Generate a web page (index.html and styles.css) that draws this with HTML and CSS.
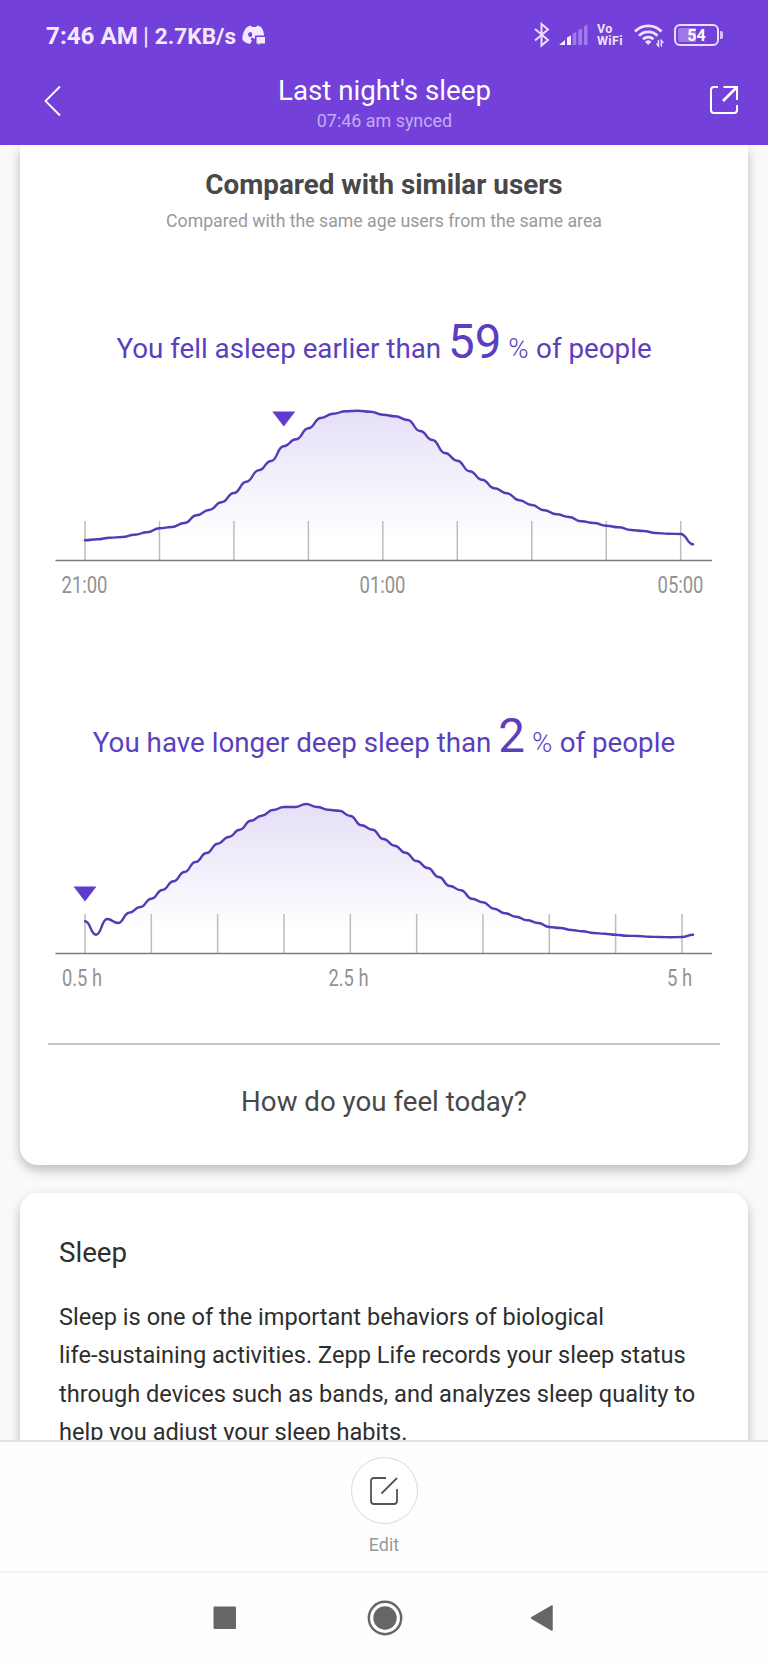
FILE: index.html
```html
<!DOCTYPE html>
<html lang="en">
<head>
  <meta charset="UTF-8" />
  <meta name="viewport" content="width=device-width, initial-scale=1.0"/>
  <title>Last night's sleep</title>
  <link rel="stylesheet" href="styles.css">
</head>
<body>

  <header>
    <!-- Status bar -->
    <div class="status-bar">
      <div class="status-left">
        <span class="time">7:46 AM</span>
        <span class="bar">|</span>
        <span class="speed">2.7KB/s</span>
        <svg class="discord" width="24" height="22" viewBox="0 0 24 22">
          <path fill="#f4e8ff" fill-rule="evenodd" d="M5 2 L8.500 .5 L10 2 H14 L15.500 .5 L19 2 C21 4.500 22 7.500 22 10.500 H13 V13.500 C12 13.500 10.500 13 10 12.500 L8.500 14 L10 15.500 L8 19 C4 18 1.500 16.500 .5 14.500 C0 10 2 5 5 2 Z M8.200 7 A2.100 2.500 0 1 0 8.200 12 A2.100 2.500 0 1 0 8.200 7 Z"/>
          <path fill="#f4e8ff" d="M14.500 12 H23 V18.500 H18 L16.500 20.500 V18.500 H14.500 Z"/>
        </svg>
      </div>
      <div class="status-right">
        <svg width="16" height="26" viewBox="0 0 16 26" fill="none" stroke="#eddcff" stroke-width="2">
          <path d="M1 7 L14 18 L7.500 23.500 V2 L14 7.500 L1 18.500"/>
        </svg>
        <svg class="signal" width="30" height="22" viewBox="0 0 30 22">
          <path fill="#f6edff" d="M0 21 L6 16 V21 Z M8 21 V13.500 L12 11.500 V21 Z"/>
          <path fill="#a07ae8" d="M13.700 21 V9.800 L17.300 8 V21 Z M19.300 21 V6.300 L23 4.500 V21 Z M25 21 V2.500 L28.500 .5 V21 Z"/>
        </svg>
        <div class="vowifi">
          <span>Vo</span>
          <span>WiFi</span>
        </div>
        <svg class="wifi" width="32" height="26" viewBox="0 0 32 26" fill="none" stroke="#f0e2ff" stroke-width="2.800">
          <path d="M2 9.500 A18.500 18.500 0 0 1 28.500 9.500"/>
          <path d="M6 13.700 A13 13 0 0 1 24.500 13.700"/>
          <path d="M10 17.300 A7.600 7.600 0 0 1 20.500 17.300"/>
          <path fill="#f0e2ff" stroke="none" d="M12 19.700 Q15.200 17 18.500 19.700 L15.200 23 Z"/>
          <path stroke-width="1.400" d="M25.500 18 V24 L23.500 21.500 M28.300 24.500 V18.500 L30.300 21"/>
        </svg>
        <div class="battery"><span>54</span></div>
        <div class="battery-cap"></div>
      </div>
    </div>

    <!-- Title bar -->
    <div class="title-bar">
      <svg width="20" height="32" viewBox="0 0 20 32" fill="none" stroke="#fff" stroke-width="1.800">
        <path d="M17 1.500 L2.500 16 L17 30.500"/>
      </svg>
      <div class="titles">
        <h1>Last night's sleep</h1>
        <p>07:46 am synced</p>
      </div>
      <svg width="30" height="30" viewBox="0 0 30 30" fill="none" stroke="#fff" stroke-width="2">
        <path d="M9 2 H5 Q2 2 2 5 V25 Q2 28 5 28 H25 Q28 28 28 25 V20"/>
        <path d="M14.500 2 H28 V15"/>
        <path stroke-width="2.600" d="M27.500 2.500 L14 16"/>
      </svg>
    </div>
  </header>

  <main>
    <!-- Comparison card -->
    <section class="card compare">
      <h2>Compared with similar users</h2>
      <p class="sub">Compared with the same age users from the same area</p>

      <div class="compare-block">
        <p class="headline">You fell asleep earlier than <span class="num">59</span> <span class="pct">%</span> of people</p>
        <svg class="chart" id="asleepChart" width="728" height="230" viewBox="0 0 728 230"></svg>
      </div>

      <div class="compare-block">
        <p class="headline">You have longer deep sleep than <span class="num">2</span> <span class="pct">%</span> of people</p>
        <svg class="chart" id="deepChart" width="728" height="230" viewBox="0 0 728 230"></svg>
      </div>

      <div class="divider"></div>
      <p class="feel">How do you feel today?</p>
    </section>

    <!-- About sleep card -->
    <section class="card about">
      <h3>Sleep</h3>
      <p>Sleep is one of the important behaviors of biological<br>life-sustaining activities. Zepp Life records your sleep status<br>through devices such as bands, and analyzes sleep quality to<br>help you adjust your sleep habits.</p>
    </section>
  </main>

  <!-- Edit bar -->
  <div class="edit-bar">
    <button class="edit-btn" aria-label="Edit">
      <svg width="30" height="30" viewBox="0 0 30 30" fill="none" stroke="#555" stroke-width="1.800">
        <path d="M17 2 H5 Q2 2 2 5 V25 Q2 28 5 28 H25 Q28 28 28 25 V13"/>
        <path d="M28 2 L12.500 17.500"/>
      </svg>
    </button>
    <span>Edit</span>
  </div>

  <!-- System navigation -->
  <nav>
    <svg width="24" height="36" viewBox="0 0 24 36"><rect x="0.500" y="6.500" width="22.500" height="22.500" rx="1" fill="#666"/></svg>
    <svg width="36" height="36" viewBox="0 0 36 36">
      <circle cx="18" cy="18" r="16.200" fill="none" stroke="#666" stroke-width="2.400"/>
      <circle cx="18" cy="18" r="11.700" fill="#666"/>
    </svg>
    <svg class="back" width="24" height="36" viewBox="0 0 24 36"><path d="M1.500 18 L22 6 V30 Z" fill="#666" stroke="#666" stroke-width="1.500" stroke-linejoin="round"/></svg>
  </nav>

  <script>
    const AXIS_Y = 170.4;

    // Share of users per slot, as heights in the chart
    const asleep = [
      150.3, 149.3, 147.7, 147, 144.7, 142.3, 138.3, 137, 133, 125.3, 120, 112.3, 103,
      91.7, 80.3, 71, 56.3, 49.3, 38.3, 28, 23.7, 21.3, 20.7, 21.7, 24.7,
      26.3, 30, 41, 50, 63, 70.7, 81.3, 89.7, 98.3, 103.3, 110.3, 115,
      120.3, 124.3, 127, 131.3, 133, 135.7, 137.3, 140, 141, 143, 143.7, 144, 154.3
    ];
    const deep = [
      138.3, 151.7, 136, 140, 129.7, 124, 115.7, 107, 98.3, 89, 79, 70, 60.7,
      54, 46.7, 37.7, 32.7, 27, 24, 24, 21, 24, 26.7, 27.7, 33,
      42.3, 46.7, 56, 62.7, 69.7, 78, 85, 94, 103, 107.3, 115.7, 119.3,
      125.7, 130.3, 133.7, 137.3, 140, 144, 145, 147, 148.3, 150, 150.7, 151.7,
      152.7, 153, 153.7, 154, 154.3, 154, 151.7
    ];

    // Each step eases in and out between two slots
    function curve(points, step) {
      let d = `M65 ${points[0]}`;
      for (let i = 1; i < points.length; i++) {
        const x = 65 + i * step;
        const mid = x - step / 2;
        d += ` C${mid} ${points[i - 1]} ${mid} ${points[i]} ${x} ${points[i]}`;
      }
      return d;
    }

    function drawChart(id, points, step, ticks, marker, labels) {
      const line = curve(points, step);
      let svg = `
        <defs>
          <linearGradient id="${id}Fill" gradientUnits="userSpaceOnUse" x1="0" y1="20" x2="0" y2="150">
            <stop offset="0" stop-color="#e5dff7"/>
            <stop offset="1" stop-color="#ffffff"/>
          </linearGradient>
        </defs>
        <path d="${line} V${AXIS_Y} H65 Z" fill="url(#${id}Fill)"/>`;
      for (let i = 0; i < ticks; i++) {
        const x = 65 + i * step * 6;
        svg += `<line class="tick" x1="${x}" y1="131" x2="${x}" y2="${AXIS_Y}"/>`;
      }
      svg += `<line class="axis" x1="35.500" y1="${AXIS_Y}" x2="692" y2="${AXIS_Y}"/>`;
      svg += `<path class="curve" d="${line}"/>`;
      svg += `<path class="marker" d="M${marker.x - 11.5} ${marker.y} h23 l-11.500 15 Z"/>`;
      labels.forEach(l => {
        svg += `<text x="${l.x}" y="203.400" textLength="${l.w}" lengthAdjust="spacingAndGlyphs">${l.text}</text>`;
      });
      document.getElementById(id).innerHTML = svg;
    }

    drawChart('asleepChart', asleep, 12.41, 9, { x: 263.8, y: 21.4 }, [
      { x: 41.5, w: 46, text: '21:00' },
      { x: 339.5, w: 46, text: '01:00' },
      { x: 637.5, w: 46, text: '05:00' }
    ]);
    drawChart('deepChart', deep, 11.055, 10, { x: 65, y: 103.4 }, [
      { x: 42, w: 40, text: '0.5 h' },
      { x: 308.5, w: 40, text: '2.5 h' },
      { x: 647, w: 25, text: '5 h' }
    ]);
  </script>

</body>
</html>
```

FILE: styles.css
```css
:root {
  --primary: #7341d9;
  --accent: #5b3fbe;
  --background: #fafafa;
}

* {
  box-sizing: border-box;
}

body {
  margin: 0;
  height: 1664px;
  display: flex;
  flex-direction: column;
  overflow: hidden;
  font-family: Roboto, "Liberation Sans", sans-serif;
  background-color: var(--background);
}

h1, h2, h3, p {
  margin: 0;
  font-weight: 400;
}

svg {
  display: block;
  flex-shrink: 0;
}

/* Header */
header {
  height: 145px;
  flex-shrink: 0;
  background-color: var(--primary);
  color: white;
}

.status-bar {
  height: 72px;
  padding: 0 45px 0 46px;
  display: flex;
  justify-content: space-between;
}

.status-left {
  display: flex;
  align-items: center;
  height: 72px;
  color: #f4e8ff;
  font-size: 24.200px;
  font-weight: 700;
}

.bar {
  margin: 0 6px 0 5px;
  font-weight: 400;
}

.speed {
  font-size: 22.600px;
}

.discord {
  margin-left: 6px;
}

.status-right {
  display: flex;
  align-items: center;
  height: 70px;
}

.signal {
  margin-left: 9px;
}

.vowifi {
  margin-left: 8px;
  width: 28px;
  display: flex;
  flex-direction: column;
  color: #f0e2ff;
  font-size: 12.500px;
  font-weight: 700;
  line-height: 12.500px;
  letter-spacing: 0.400px;
}

.wifi {
  margin-left: 8px;
}

.battery {
  margin-left: 9px;
  width: 45px;
  height: 22px;
  border: 2.500px solid #eddcff;
  border-radius: 6px;
  background: linear-gradient(90deg, #9f78e8 50%, transparent 50%) content-box;
  padding: 2px;
  color: white;
  font-size: 16px;
  font-weight: 700;
  line-height: 15px;
  text-align: center;
}

.battery-cap {
  margin-left: 1px;
  width: 3px;
  height: 8px;
  border-radius: 0 2px 2px 0;
  background: #d9c2fa;
}

.title-bar {
  height: 73px;
  padding: 1px 29px 0 43px;
  display: flex;
  justify-content: space-between;
}

.title-bar > svg {
  margin-top: 12px;
}

.titles {
  text-align: center;
  margin-right: 3px;
}

.titles h1 {
  font-size: 27.700px;
  line-height: 36px;
}

.titles p {
  margin-top: 1px;
  font-size: 17.900px;
  line-height: 22px;
  color: #c6aaf3;
}

/* Scrolling content */
main {
  height: 1295px;
  flex-shrink: 0;
  overflow: hidden;
  padding: 0 20px;
}

.card {
  background: white;
  box-shadow: 0 5px 12px rgba(0,0,0,0.25);
}

.compare {
  height: 1020px;
  padding-top: 22px;
  border-radius: 0 0 18px 18px;
  text-align: center;
}

.compare h2 {
  font-size: 27.800px;
  font-weight: 700;
  line-height: 36px;
  color: #484848;
}

.sub {
  margin-top: 7px;
  font-size: 17.700px;
  line-height: 22px;
  color: #999;
}

.compare-block {
  height: 393.400px;
}

.sub + .compare-block {
  margin-top: 87.400px;
}

.headline {
  height: 60px;
  font-size: 27.750px;
  line-height: 60px;
  color: var(--accent);
}

.num {
  font-size: 47.500px;
  line-height: 0;
}

.pct {
  font-size: 27.500px;
  font-weight: 300;
  letter-spacing: 0.500px;
}

.chart {
  margin-top: 10.600px;
}

.tick {
  stroke: #bdbdbd;
  stroke-width: 1.500;
}

.axis {
  stroke: #7b7b7b;
  stroke-width: 1.500;
}

.curve {
  fill: none;
  stroke: #5639b4;
  stroke-width: 2.400;
  stroke-linecap: round;
}

.marker {
  fill: #613bd0;
}

.chart text {
  font-size: 24px;
  font-weight: 400;
  fill: #929292;
}

.divider {
  margin: -63px 28px 0;
  height: 2px;
  background: #c6c6c6;
}

.feel {
  margin-top: 39px;
  font-size: 27.700px;
  line-height: 36px;
  color: #484848;
}

.about {
  margin-top: 28px;
  height: 300px;
  padding: 42px 39px;
  border-radius: 18px;
  color: #2e2e2e;
}

.about h3 {
  font-size: 27.700px;
  line-height: 36px;
}

.about p {
  margin-top: 27px;
  font-size: 23.600px;
  line-height: 38.400px;
  white-space: nowrap;
}

/* Bottom bars */
.edit-bar {
  height: 133px;
  flex-shrink: 0;
  border-top: 2px solid #e2e2e2;
  border-bottom: 2px solid #f1f1f1;
  background: #fefefe;
  display: flex;
  flex-direction: column;
  align-items: center;
  padding-top: 15px;
  font-size: 17.900px;
  color: #999;
}

.edit-btn {
  width: 67px;
  height: 67px;
  padding: 0;
  border: 1.500px solid #dadada;
  border-radius: 50%;
  background: white;
  display: flex;
  align-items: center;
  justify-content: center;
}

.edit-bar span {
  margin-top: 10px;
  line-height: 22px;
}

nav {
  flex: 1;
  background: #fefefe;
  display: flex;
  justify-content: center;
  align-items: flex-start;
  gap: 130px;
  padding: 27px 2px 0 0;
}

.back {
  margin-left: -3px;
}
```
